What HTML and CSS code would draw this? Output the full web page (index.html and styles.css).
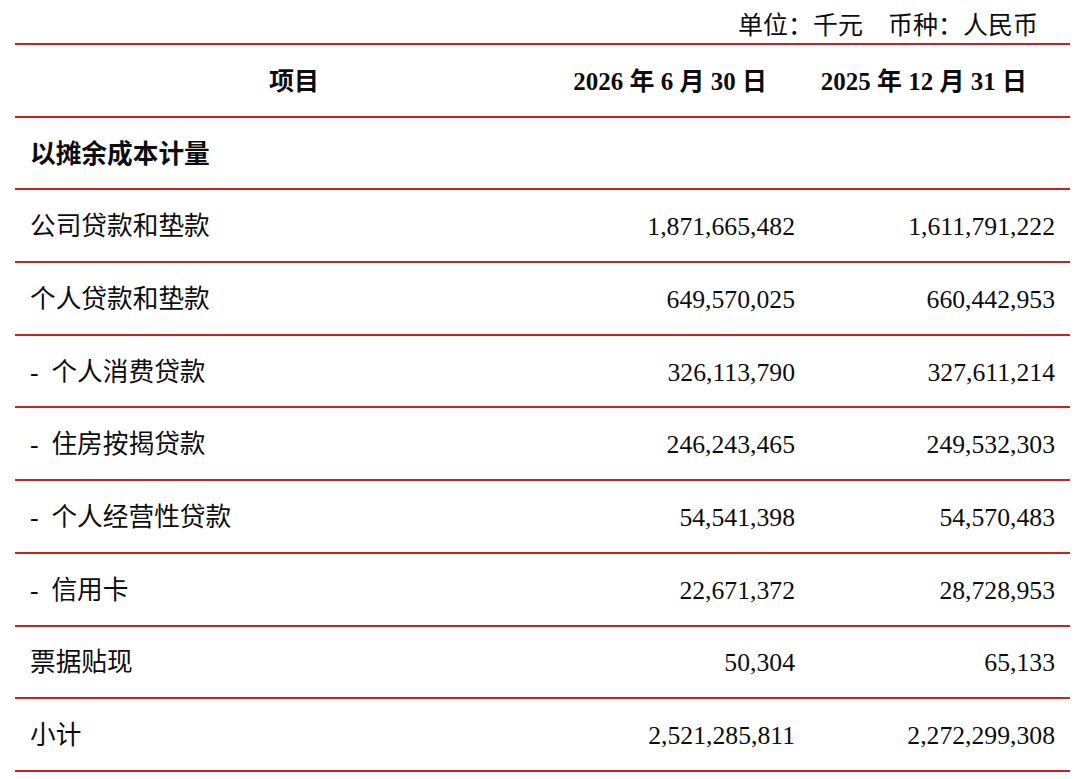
FILE: index.html
```html
<!DOCTYPE html>
<html lang="zh-CN">
<head>
<meta charset="utf-8">
<title>贷款和垫款</title>
<link rel="stylesheet" href="styles.css">
</head>
<body>
<div class="page">
  <div class="unit">单位：千元　币种：人民币</div>
  <div class="table">
    <div class="row head">
      <div class="c1 center">项目</div>
      <div class="c2">2026 年 6 月 30 日</div>
      <div class="c3">2025 年 12 月 31 日</div>
    </div>
    <div class="row">
      <div class="c1 bold">以摊余成本计量</div>
      <div class="c2"></div>
      <div class="c3"></div>
    </div>
    <div class="row">
      <div class="c1">公司贷款和垫款</div>
      <div class="c2">1,871,665,482</div>
      <div class="c3">1,611,791,222</div>
    </div>
    <div class="row">
      <div class="c1">个人贷款和垫款</div>
      <div class="c2">649,570,025</div>
      <div class="c3">660,442,953</div>
    </div>
    <div class="row">
      <div class="c1">-&nbsp;&nbsp;个人消费贷款</div>
      <div class="c2">326,113,790</div>
      <div class="c3">327,611,214</div>
    </div>
    <div class="row">
      <div class="c1">-&nbsp;&nbsp;住房按揭贷款</div>
      <div class="c2">246,243,465</div>
      <div class="c3">249,532,303</div>
    </div>
    <div class="row">
      <div class="c1">-&nbsp;&nbsp;个人经营性贷款</div>
      <div class="c2">54,541,398</div>
      <div class="c3">54,570,483</div>
    </div>
    <div class="row">
      <div class="c1">-&nbsp;&nbsp;信用卡</div>
      <div class="c2">22,671,372</div>
      <div class="c3">28,728,953</div>
    </div>
    <div class="row">
      <div class="c1">票据贴现</div>
      <div class="c2">50,304</div>
      <div class="c3">65,133</div>
    </div>
    <div class="row">
      <div class="c1">小计</div>
      <div class="c2">2,521,285,811</div>
      <div class="c3">2,272,299,308</div>
    </div>
  </div>
</div>
</body>
</html>
```

FILE: styles.css
```css
html, body {
  margin: 0;
  padding: 0;
  background: #ffffff;
}

body {
  font-family: "Liberation Serif", "Noto Sans CJK SC", serif;
  font-size: 25.7px;
  color: #0d0d0d;
}

.page {
  width: 1055px;
  padding-left: 15px;
}

.unit {
  height: 43px;
  box-sizing: border-box;
  padding-top: 11px;
  padding-right: 32px;
  text-align: right;
  font-size: 25px;
  line-height: 30px;
}

.table {
  border-top: 2px solid #cc1f26;
}

.row {
  display: grid;
  grid-template-columns: 558px 237px 260px;
  height: 72.7px;
  box-sizing: border-box;
  padding-top: 3px;
  border-bottom: 2px solid #cc1f26;
  align-items: center;
  line-height: 30px;
}

.c1 {
  padding-left: 15px;
  white-space: nowrap;
}

.c2, .c3 {
  text-align: right;
  padding-right: 15px;
  white-space: nowrap;
}

.center {
  text-align: center;
  padding-left: 0;
}

.head {
  font-weight: 700;
  font-size: 25px;
}

.head .c2, .head .c3 {
  padding-right: 43px;
}

.bold {
  font-weight: 700;
}
```
